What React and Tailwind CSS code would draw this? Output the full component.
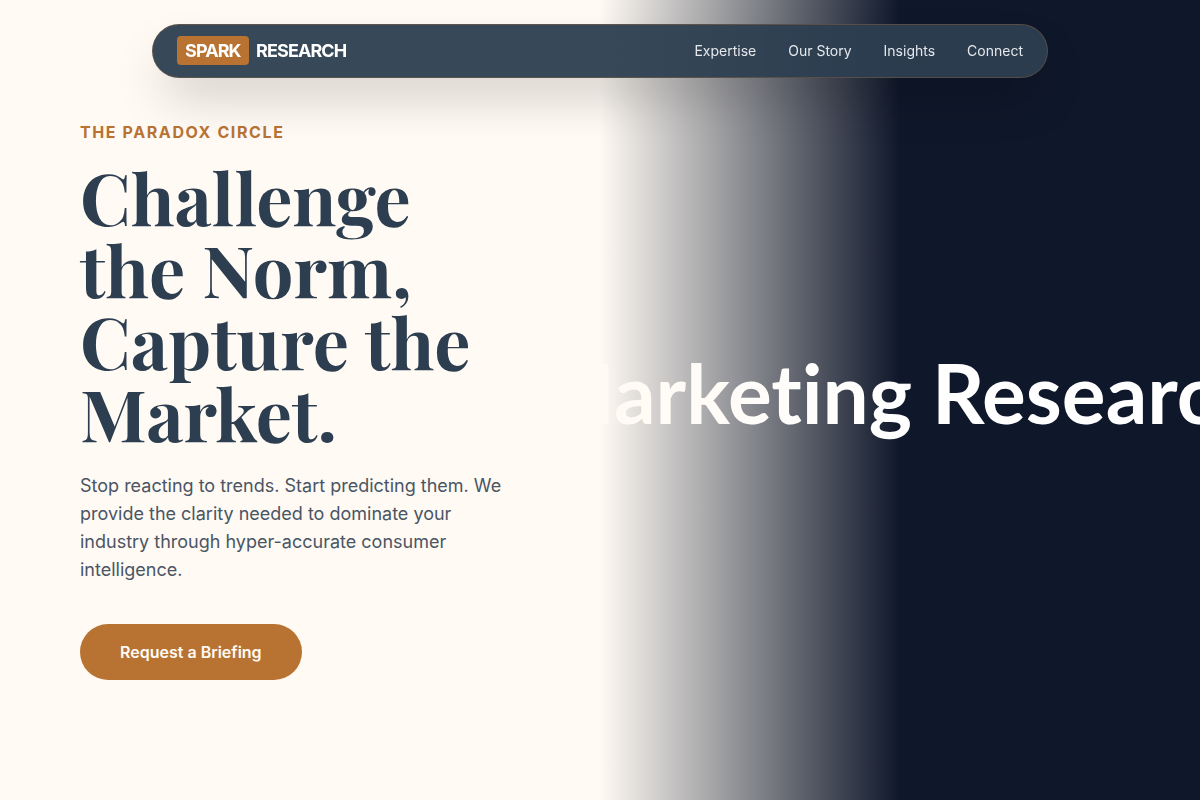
const navLinks = [
    { label: 'Expertise', href: '#expertise' },
    { label: 'Our Story', href: '#story' },
    { label: 'Insights', href: '#insights' },
    { label: 'Connect', href: '#connect' },
];

const Navbar = () => {
    return (
        <header className="fixed inset-x-0 top-6 z-20 flex justify-center px-4">
            <nav className="flex w-full max-w-4xl items-center justify-between rounded-full border border-[#b87333]/30 bg-[#2c3e50]/95 px-6 py-3 shadow-2xl backdrop-blur-md">
                <a href="#top" className="text-lg font-bold tracking-tighter text-white">
                    <span className="mr-1 rounded-sm bg-[#b87333] px-2 py-1">SPARK</span> RESEARCH
                </a>
                <ul className="flex gap-8 text-sm text-gray-200">
                    {navLinks.map((link) => (
                        <li key={link.label}>
                            <a href={link.href}>{link.label}</a>
                        </li>
                    ))}
                </ul>
            </nav>
        </header>
    );
};

const Hero = () => {
    return (
        <section className="grid min-h-screen grid-cols-2">
            <div className="flex flex-col items-start justify-center px-20">
                <p className="mb-4 font-bold tracking-widest text-[#b87333]">THE PARADOX CIRCLE</p>
                <h1 className="mb-6 font-['Playfair_Display','Liberation_Serif',serif] text-7xl leading-none font-bold text-[#2c3e50]">
                    Challenge the Norm, Capture the Market.
                </h1>
                <p className="mb-10 text-lg leading-7 text-gray-600">
                    Stop reacting to trends. Start predicting them. We provide the clarity needed to
                    dominate your industry through hyper-accurate consumer intelligence.
                </p>
                <button type="button" className="rounded-full bg-[#b87333] px-10 py-4 font-semibold text-[#fffaf3]">
                    Request a Briefing
                </button>
            </div>

            <div className="relative flex items-center justify-center overflow-hidden bg-[#0f172a]">
                <p className="shrink-0 pb-4 font-['Lato',sans-serif] text-[82px] font-bold whitespace-nowrap text-white [font-variant-ligatures:none]">
                    Marketing Research
                </p>
                {/* fades the panel into the page colour */}
                <div className="absolute inset-0 bg-linear-to-r/srgb from-[#fffaf3] to-transparent to-50%"></div>
            </div>
        </section>
    );
};

export default function App() {
    return (
        <main id="top" className="bg-[#fffaf3] font-['Inter',sans-serif]">
            <Navbar />
            <Hero />
        </main>
    );
}
